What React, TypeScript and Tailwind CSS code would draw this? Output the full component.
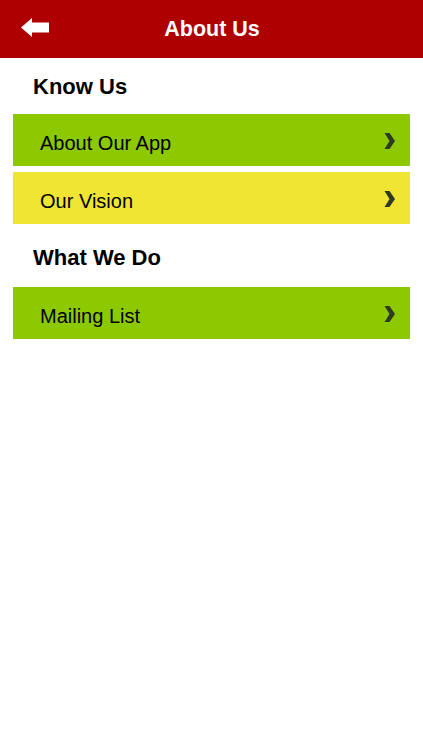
const Chevron = () => (
  <svg width="11" height="16" viewBox="0 0 11 16" className="shrink-0 mt-[2px]">
    <path d="M0.5 0 L5.5 0 L11 8 L5.5 16 L0.5 16 L5.5 8 Z" fill="#2f3a22" />
  </svg>
);

const BackArrow = () => (
  <svg width="28" height="19" viewBox="0 0 28 19">
    <path d="M0 9.5 L11 0 L11 4.5 L28 4.5 L28 14.5 L11 14.5 L11 19 Z" fill="#ffffff" />
  </svg>
);

interface RowProps {
  label: string;
  color: string;
}

const Row = ({ label, color }: RowProps) => (
  <div className={`${color} h-[52px] mx-[13px] flex items-center justify-between pl-[27px] pr-[15px]`}>
    <span className="text-[20px] text-black pt-[5px]">{label}</span>
    <Chevron />
  </div>
);

export default function App() {
  return (
    <div className="w-[423px] h-[750px] bg-white font-['Liberation_Sans',Arial,sans-serif]">
      <div className="relative h-[58px] bg-[#ae0000] flex items-center justify-center">
        <button className="absolute left-[21px] top-[18px]">
          <BackArrow />
        </button>
        <h1 className="text-white text-[21.5px] font-bold pl-[1px]">About Us</h1>
      </div>
      <h2 className="pl-[33px] h-[56px] flex items-center text-[22px] font-bold text-black">Know Us</h2>
      <div className="flex flex-col gap-[6px]">
        <Row label="About Our App" color="bg-[#8dc900]" />
        <Row label="Our Vision" color="bg-[#f0e532]" />
      </div>
      <h2 className="pl-[33px] h-[63px] flex items-center text-[22px] font-bold text-black pt-[4px]">What We Do</h2>
      <Row label="Mailing List" color="bg-[#8dc900]" />
    </div>
  );
}
